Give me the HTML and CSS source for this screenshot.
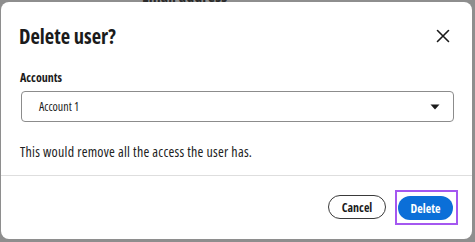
FILE: index.html
```html
<!DOCTYPE html>
<html>
<head>
<meta charset="utf-8">
<link rel="stylesheet" href="styles.css">
</head>
<body>
<div class="backdrop-text"><span>Email address</span></div>
<div class="modal">
  <div class="modal-header">
    <h2 class="modal-title">Delete user?</h2>
    <button class="close-btn" aria-label="Close">
      <svg width="14" height="14" viewBox="0 0 14 14"><path d="M1.5 1.5 L12.5 12.5 M12.5 1.5 L1.5 12.5" stroke="#1b1b1b" stroke-width="1.6" fill="none" stroke-linecap="round"/></svg>
    </button>
  </div>
  <div class="modal-body">
    <label class="field-label">Accounts</label>
    <div class="select">
      <span class="select-value">Account 1</span>
      <svg class="caret" width="10" height="6" viewBox="0 0 10 6"><path d="M0.5 0.5 H9.5 L5 5.5 Z" fill="#1b1b1b"/></svg>
    </div>
    <p class="message">This would remove all the access the user has.</p>
  </div>
  <div class="modal-footer">
    <button class="btn btn-secondary">Cancel</button>
    <div class="focus-ring"><button class="btn btn-primary">Delete</button></div>
  </div>
</div>
</body>
</html>
```

FILE: styles.css
```css
* { box-sizing: border-box; }
html, body { margin: 0; padding: 0; }
body {
  width: 475px;
  height: 242px;
  background: #8e8e8e;
  font-family: "Open Sans", "Noto Sans", sans-serif;
  font-stretch: 80%;
  color: #1b1b1b;
  overflow: hidden;
}
.backdrop-text {
  height: 2px;
  overflow: hidden;
  padding-left: 142px;
}
.backdrop-text span {
  display: block;
  margin-top: -10px;
  font-size: 16px;
  line-height: 12px;
  font-weight: 700;
  color: #2a2a2a;
}
.modal {
  margin: 0 3px 0 1px;
  width: 471px;
  height: 237px;
  background: #ffffff;
  border-radius: 8px;
  display: flex;
  flex-direction: column;
}
.modal-header {
  display: flex;
  align-items: center;
  justify-content: space-between;
  padding: 20px 18px 0 18px;
  height: 48px;
}
.modal-title {
  margin: 0;
  font-size: 20.5px;
  line-height: 28px;
  font-weight: 700;
}
.close-btn {
  border: 0;
  background: none;
  padding: 0;
  width: 14px;
  height: 14px;
  display: flex;
  margin-right: 4px;
}
.modal-body {
  padding: 20px 18px 0 19px;
  display: flex;
  flex-direction: column;
}
.field-label {
  font-size: 12px;
  line-height: 16px;
  font-weight: 700;
  margin-bottom: 5px;
}
.select {
  height: 31px;
  margin-left: 1px;
  border: 1px solid #8c8c8c;
  border-radius: 4px;
  display: flex;
  align-items: center;
  justify-content: space-between;
  padding: 0 13px 0 17px;
}
.select-value {
  font-size: 12px;
  line-height: 16px;
}
.message {
  margin: 20px 0 0;
  font-size: 14px;
  line-height: 20px;
  letter-spacing: 0.25px;
  color: #222;
}
.modal-footer {
  margin-top: auto;
  border-top: 1px solid #dedede;
  height: 64px;
  display: flex;
  align-items: flex-start;
  justify-content: flex-end;
  gap: 9px;
  padding: 19px 14px 0 0;
}
.btn {
  height: 24px;
  border-radius: 12px;
  font-family: inherit;
  font-stretch: 80%;
  font-size: 12px;
  font-weight: 700;
  padding: 0;
  display: flex;
  align-items: center;
  justify-content: center;
}
.btn-secondary {
  width: 58px;
  background: #fff;
  border: 1px solid #3a3a3a;
  color: #1b1b1b;
}
.focus-ring {
  margin-top: -5px;
  padding: 4px 3px 3px 1px;
  border: 2px solid #a457f0;
}
.btn-primary {
  width: 55px;
  background: #0b6fd8;
  border: 0;
  color: #fff;
}
```
